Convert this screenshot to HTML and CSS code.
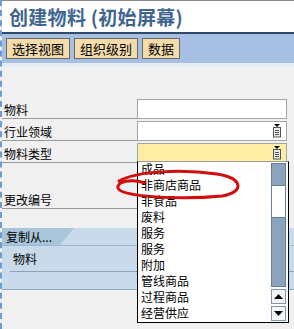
FILE: index.html
```html
<!DOCTYPE html>
<html lang="zh">
<head>
    <meta charset="UTF-8">
    <title>创建物料 (初始屏幕)</title>
    <link rel="stylesheet" href="styles.css">
</head>
<body>
<div class="screen">
    <header class="titlebar">
        <h1>创建物料 (初始屏幕)</h1>
    </header>
    <div class="toolbar">
        <button class="tb-btn">选择视图</button>
        <button class="tb-btn">组织级别</button>
        <button class="tb-btn">数据</button>
    </div>
    <main class="content">
        <div class="form">
            <div class="row">
                <label class="row-label">物料</label>
                <div class="field"></div>
            </div>
            <div class="row">
                <label class="row-label">行业领域</label>
                <div class="field">
                    <svg class="f4" width="10" height="14" viewBox="0 0 10 14"><path d="M2 0h6l-3 3z" fill="#000"/><rect x="1.5" y="3.5" width="7" height="9.5" fill="#e8ecf0" stroke="#555"/><path d="M3 6.5h4M3 8.5h4M3 10.5h4" stroke="#555"/></svg>
                </div>
            </div>
            <div class="row">
                <label class="row-label">物料类型</label>
                <div class="field active">
                    <svg class="f4" width="10" height="14" viewBox="0 0 10 14"><path d="M2 0h6l-3 3z" fill="#000"/><rect x="1.5" y="3.5" width="7" height="9.5" fill="#e8ecf0" stroke="#555"/><path d="M3 6.5h4M3 8.5h4M3 10.5h4" stroke="#555"/></svg>
                </div>
            </div>
            <div class="row row-gap">
                <label class="row-label">更改编号</label>
            </div>
        </div>

        <section class="copy">
            <div class="tab-row">
                <div class="tab">复制从...</div>
            </div>
            <div class="copy-row">物料</div>
        </section>
    </main>

    <div class="dropdown">
        <ul class="options">
            <li>成品</li>
            <li>非商店商品</li>
            <li>非食品</li>
            <li>废料</li>
            <li>服务</li>
            <li>服务</li>
            <li>附加</li>
            <li>管线商品</li>
            <li>过程商品</li>
            <li>经营供应</li>
        </ul>
        <div class="scrollbar">
            <div class="track"><div class="thumb"></div></div>
            <div class="arrow"><svg width="9" height="5" viewBox="0 0 9 5"><path d="M0 5h9L4.5 0z" fill="#000"/></svg></div>
            <div class="arrow"><svg width="9" height="5" viewBox="0 0 9 5"><path d="M0 0h9L4.5 5z" fill="#000"/></svg></div>
        </div>
    </div>

    <svg class="mark" width="294" height="329" viewBox="0 0 294 329">
        <path d="M143 183 C128 178 115 182 116 188 C118 197 180 200 220 196 C243 192 241 178 215 174 C180 169 135 171 117 181" fill="none" stroke="#d10d0d" stroke-width="3" stroke-linecap="round"/>
    </svg>
</div>
</body>
</html>
```

FILE: styles.css
```css
body {
    margin: 0;
    font-family: "Noto Sans CJK SC", "DejaVu Sans", sans-serif;
    background: #f0f0f0;
}

.screen {
    position: relative;
    width: 294px;
    height: 329px;
    overflow: hidden;
    border-left: 2px dashed #6b9bd8;
    box-sizing: border-box;
    background: #f0f0f0;
}

.titlebar {
    height: 31px;
    background: #fff;
    border-top: 1px solid #8a8a8a;
    border-bottom: 2px solid #2d4a6b;
    display: flex;
    align-items: center;
}

.titlebar h1 {
    margin: 0 0 0 7px;
    font-size: 19px;
    font-weight: bold;
    color: #3f6590;
    letter-spacing: 0.3px;
}

.toolbar {
    height: 29px;
    background: #a6bfe2;
    border-bottom: 4px solid #e6ecf3;
    display: flex;
    align-items: center;
    gap: 4px;
    padding-left: 4px;
}

.tb-btn {
    height: 21px;
    padding: 0 5px;
    background: #f4dcaa;
    border: 1px solid #6a6a6a;
    font-family: inherit;
    font-size: 13px;
    line-height: 19px;
    color: #000;
}

.content {
    padding-top: 30px;
}

.row {
    display: flex;
    align-items: flex-end;
    height: 22px;
    font-size: 12px;
}

.row-label {
    flex: 0 0 135px;
    height: 20px;
    line-height: 22px;
    padding-left: 2px;
    box-sizing: border-box;
    border-bottom: 1px solid #9a9a9a;
}

.field {
    width: 150px;
    height: 20px;
    box-sizing: border-box;
    background: #fff;
    border: 1px solid #a5a5a5;
    display: flex;
    align-items: center;
    justify-content: flex-end;
    padding-right: 4px;
}

.field.active {
    background: #fdeea6;
}

.row-gap {
    margin-top: 24px;
}

.copy {
    margin-top: 19px;
    height: 61px;
    background: #c9daea;
    border-bottom: 1px solid #8aa8c6;
}

.tab-row {
    height: 17px;
    border-bottom: 1px solid #9db8cf;
}

.tab {
    width: 72px;
    height: 17px;
    background: #a9c5da;
    clip-path: polygon(0 0, 100% 0, 80% 100%, 0 100%);
    font-size: 12px;
    line-height: 17px;
    padding-left: 4px;
    box-sizing: border-box;
}

.copy-row {
    margin: 4px 0 0 8px;
    height: 21px;
    padding-left: 3px;
    font-size: 12px;
    line-height: 18px;
    border-bottom: 1px solid #8ca3b8;
}

.dropdown {
    position: absolute;
    left: 135px;
    top: 161px;
    width: 152px;
    height: 162px;
    box-sizing: border-box;
    background: #fff;
    border: 1px solid #000;
    border-top-color: #9a9a9a;
    display: flex;
}

.options {
    flex: 1;
    margin: 0;
    padding: 0;
    list-style: none;
    overflow: hidden;
}

.options li {
    height: 16px;
    line-height: 16px;
    font-size: 12px;
    padding-left: 3px;
}

.options li:first-child {
    margin-top: -1px;
}

.scrollbar {
    width: 15px;
    margin: 1px 2px 1px 0;
    display: flex;
    flex-direction: column;
    gap: 2px;
}

.track {
    flex: 1;
    background: #8ba3bd;
    border: 1px solid #667f99;
    padding-top: 21px;
}

.thumb {
    height: 31px;
    background: #fff;
    border-top: 1px solid #667f99;
    border-bottom: 1px solid #667f99;
}

.arrow {
    height: 15px;
    box-sizing: border-box;
    background: #f3f5f8;
    border: 1px solid #7f96ae;
    display: flex;
    align-items: center;
    justify-content: center;
}

.mark {
    position: absolute;
    left: 0;
    top: 0;
    pointer-events: none;
}
```
